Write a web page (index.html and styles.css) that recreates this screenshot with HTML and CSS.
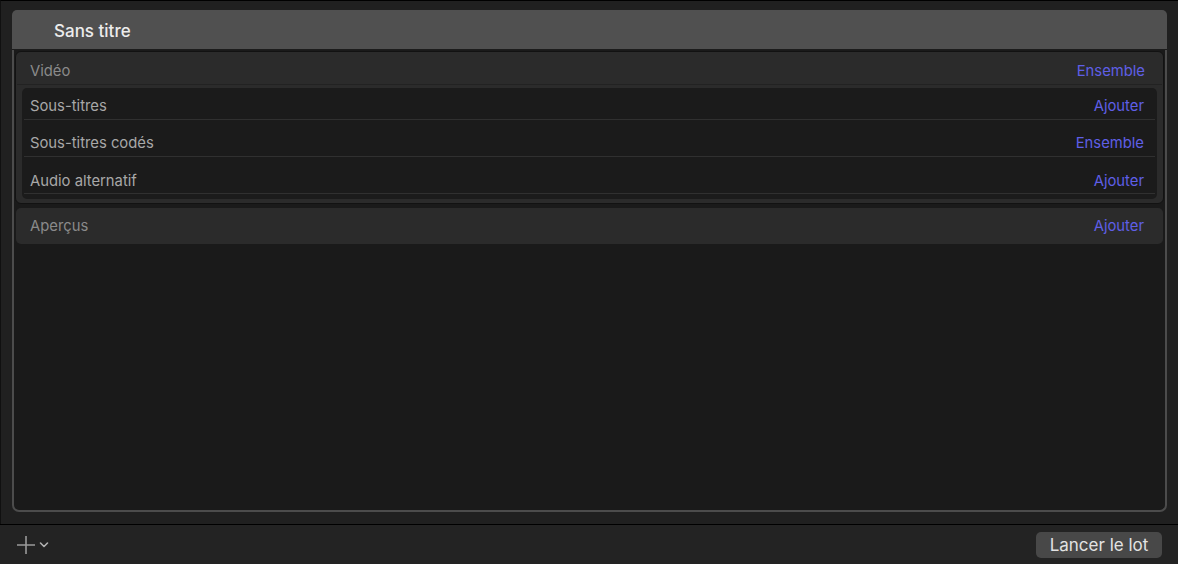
FILE: index.html
```html
<!DOCTYPE html>
<html lang="fr">
<head>
<meta charset="utf-8">
<title>Sans titre</title>
<link rel="stylesheet" href="styles.css">
</head>
<body>
<div class="app">
  <main class="main">
    <section class="panel">
      <header class="panel-head">Sans titre</header>
      <div class="panel-body">
        <div class="group">
          <div class="group-head">
            <span class="label dim">Vidéo</span>
            <span class="action">Ensemble</span>
          </div>
          <div class="inner">
            <div class="row first">
              <span class="label">Sous-titres</span>
              <span class="action">Ajouter</span>
            </div>
            <div class="row">
              <span class="label">Sous-titres codés</span>
              <span class="action">Ensemble</span>
            </div>
            <div class="row last">
              <span class="label">Audio alternatif</span>
              <span class="action">Ajouter</span>
            </div>
          </div>
        </div>
        <div class="single">
          <span class="label dim">Aperçus</span>
          <span class="action">Ajouter</span>
        </div>
      </div>
    </section>
  </main>
  <footer class="footer">
    <div class="add">
      <svg width="36" height="20" viewBox="0 0 36 20" aria-hidden="true">
        <path d="M1 10H19M10 1V19" stroke="#9a9a9a" stroke-width="1.6" fill="none"/>
        <path d="M24.5 8L28 11.5L31.5 8" stroke="#b0b0b0" stroke-width="1.6" fill="none" stroke-linecap="round" stroke-linejoin="round"/>
      </svg>
    </div>
    <button class="run">Lancer le lot</button>
  </footer>
</div>
</body>
</html>
```

FILE: styles.css
```css
* { box-sizing: border-box; }
html, body { margin: 0; padding: 0; }
body {
  width: 1178px;
  height: 564px;
  background: #212121;
  font-family: Inter, "Helvetica Neue", "Liberation Sans", Arial, sans-serif;
  overflow: hidden;
}
.app {
  display: flex;
  flex-direction: column;
  height: 564px;
}
.main {
  flex: 1;
  display: flex;
  flex-direction: column;
  border-top: 1px solid #000;
  border-left: 1px solid #101010;
  padding: 9px 11px 12px 11px;
  background: #202020;
}
.panel {
  flex: 1;
  display: flex;
  flex-direction: column;
}
.panel-head {
  height: 40px;
  flex: none;
  background: #505050;
  border-radius: 5px 5px 0 0;
  color: #ececec;
  font-size: 17px;
  font-weight: 500;
  padding-left: 42px;
  padding-top: 3px;
  display: flex;
  align-items: center;
  border-bottom: 1px solid #1c1c1c;
}
.panel-body {
  flex: 1;
  background: #1a1a1a;
  border: 2px solid #4c4c4c;
  border-top: none;
  border-radius: 0 0 7px 7px;
  padding: 1px 1px 0 1px;
  display: flex;
  flex-direction: column;
  gap: 4px;
}
.label {
  font-size: 14.8px;
  color: #a8a8a8;
  line-height: 17px;
}
.label.dim { color: #8a8a8a; }
.action {
  font-size: 14.8px;
  line-height: 17px;
  color: #5f5fe6;
}
.group {
  background: #2b2b2b;
  border: 1px solid #121212;
  border-radius: 6px;
  padding: 0 6px 4px 6px;
}
.group-head {
  height: 33px;
  display: flex;
  justify-content: space-between;
  align-items: flex-end;
  border-bottom: 1px solid #222;
  margin: 0 -5px;
  padding: 0 17px 4px 13px;
}
.inner {
  margin-top: 3px;
  background: #1b1b1b;
  border-radius: 5px;
  padding: 0 2px 5px 2px;
}
.row {
  height: 37px;
  display: flex;
  justify-content: space-between;
  align-items: flex-end;
  padding: 0 11px 4px 6px;
  border-bottom: 1px solid #303030;
}
.row.first { height: 32px; }
.row.last { padding-bottom: 3px; }
.single {
  height: 36px;
  background: #2b2b2b;
  border-radius: 5px;
  margin: 0 1px;
  display: flex;
  justify-content: space-between;
  align-items: center;
  padding: 0 19px 0 14px;
}
.footer {
  height: 40px;
  flex: none;
  background: #232323;
  border-top: 1px solid #000;
  display: flex;
  justify-content: space-between;
  align-items: center;
  padding: 0 16px 0 16px;
}
.add {
  display: flex;
  align-items: center;
}
.add svg { display: block; }
.run {
  width: 126px;
  height: 26px;
  background: #484848;
  border: none;
  border-radius: 5px;
  color: #e2e2e2;
  font-family: inherit;
  font-size: 17px;
  padding: 0;
  margin-top: 1px;
}
```
